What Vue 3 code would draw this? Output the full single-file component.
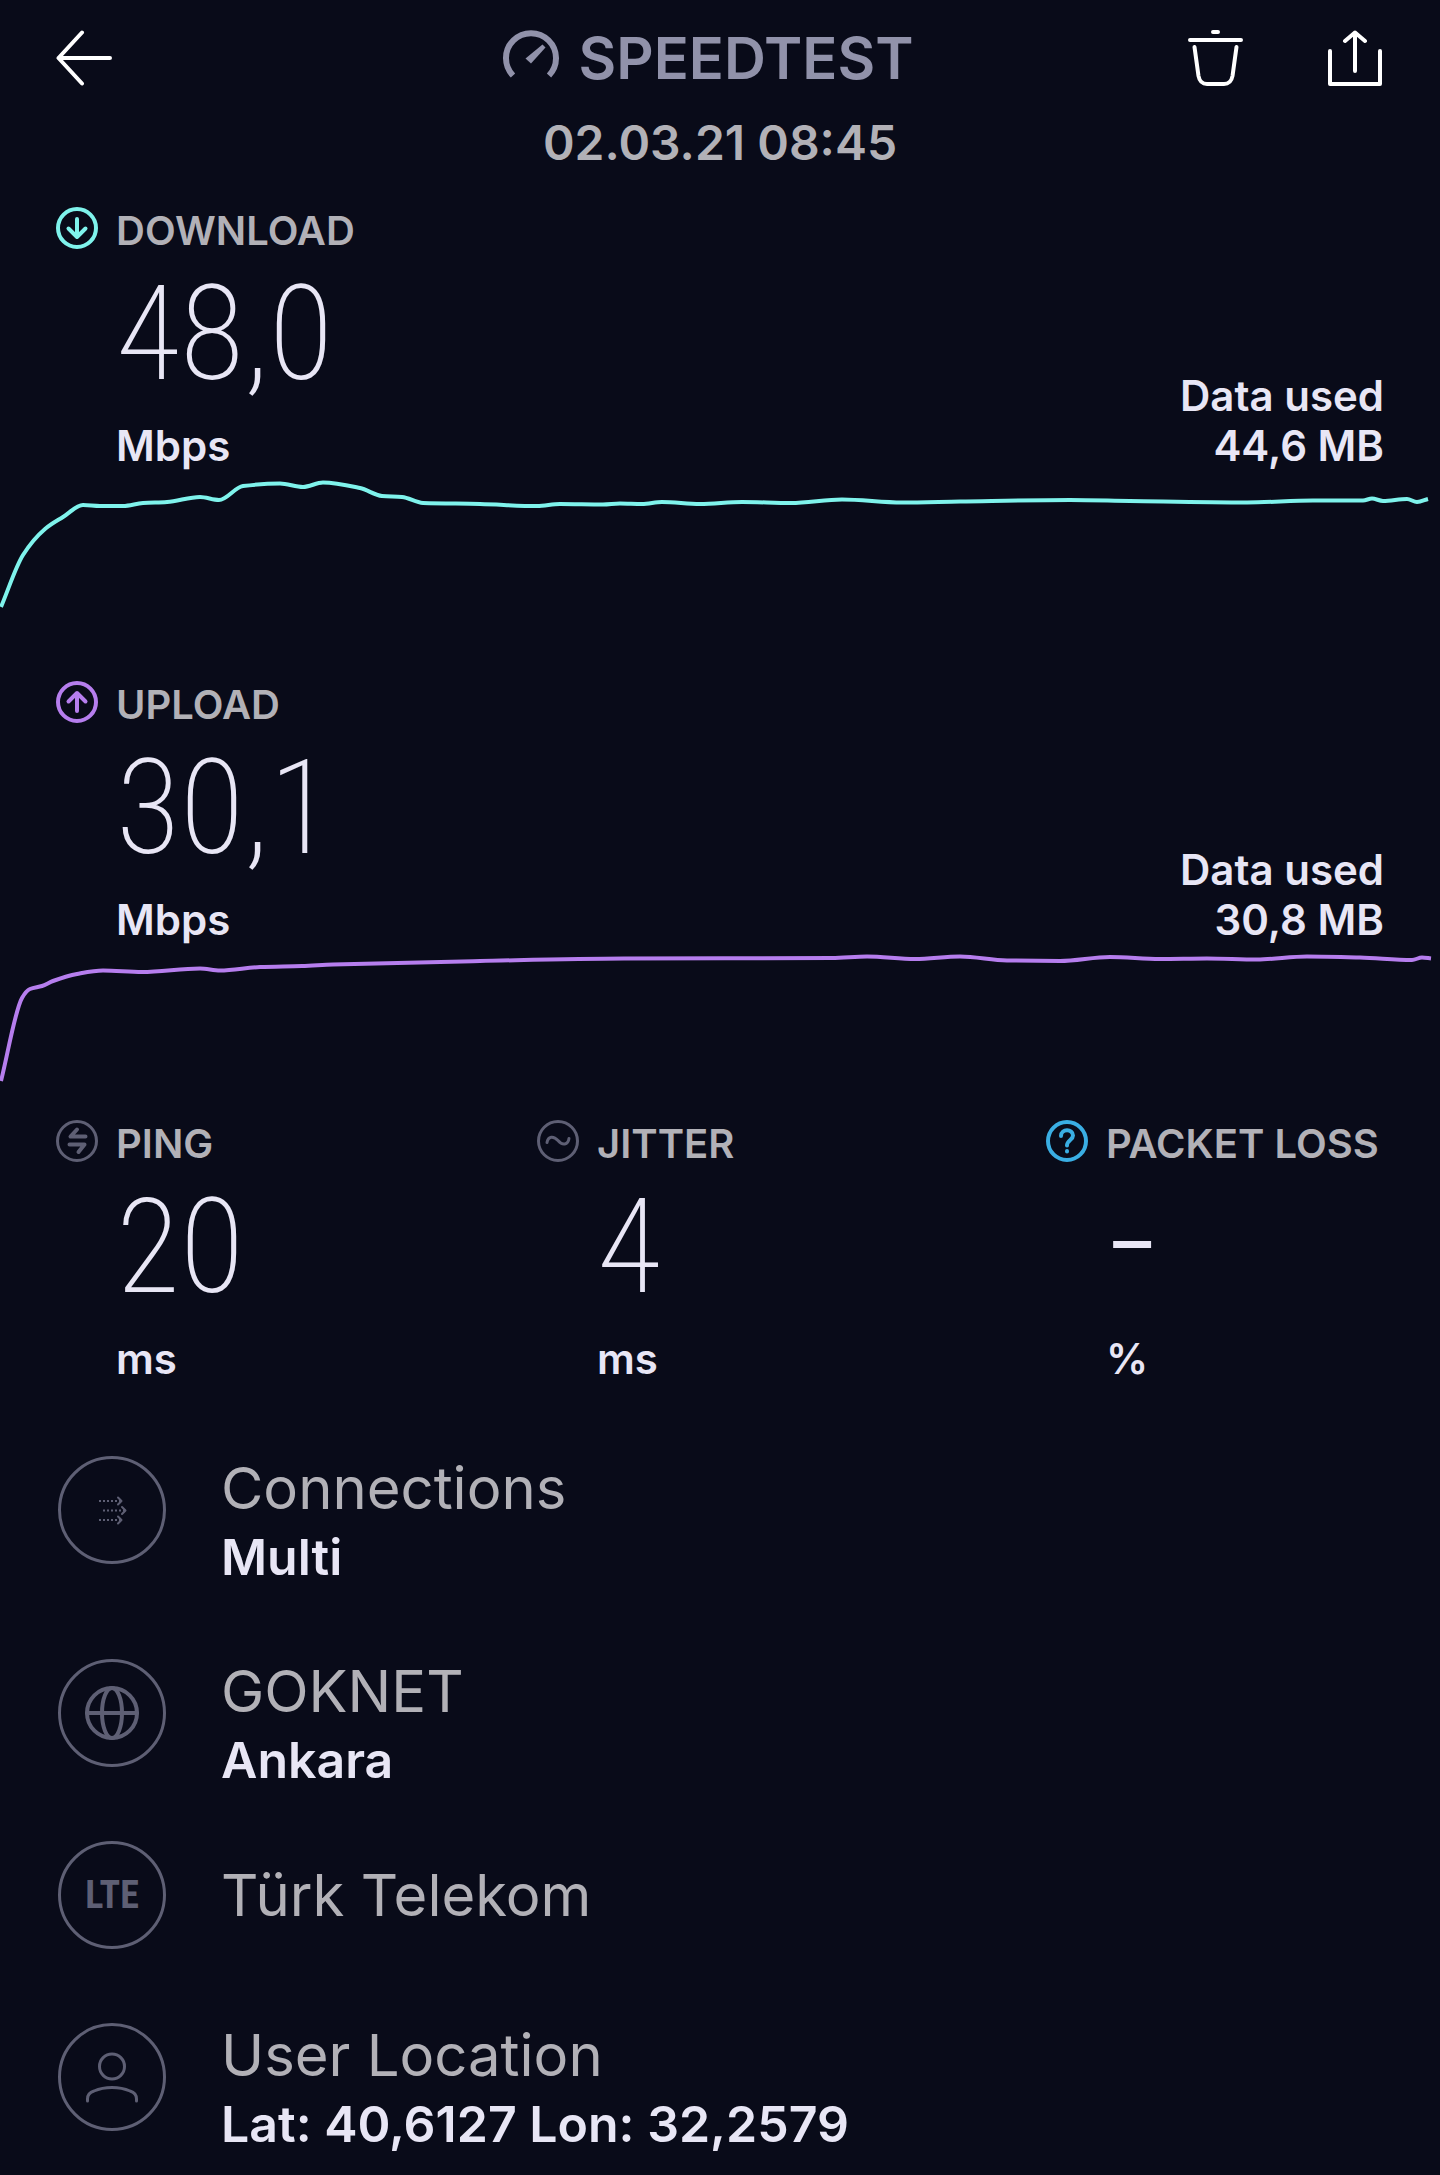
<script setup>
const download = [
  [1, 136], [23, 84], [45, 58], [63, 46], [83, 34], [100, 35], [123, 35], [143, 32], [167, 31],
  [200, 26], [219, 29], [243, 15], [280, 12.5], [303, 16], [323, 11.5], [360, 17], [382, 25],
  [402, 26], [423, 32], [480, 33], [537, 35], [560, 33], [603, 33.5], [620, 32.5], [642, 33],
  [662, 31], [700, 33], [742, 31], [791, 32], [842, 28.5], [902, 31.5], [960, 30.5], [1070, 29],
  [1130, 30], [1247, 31.5], [1313, 29.5], [1363, 29.5], [1372, 27.5], [1383, 30], [1407, 28],
  [1417, 31], [1428, 28],
]

const upload = [
  [1, 136], [22, 53], [30, 44], [42, 41], [53, 36], [77, 29], [103, 25.5], [142, 27], [200, 23.5],
  [220, 25.5], [260, 22], [302, 21], [333, 19.5], [480, 16], [624, 13.5], [832, 13], [867, 11.5],
  [915, 14], [960, 11.5], [1007, 15.5], [1060, 16], [1110, 12], [1160, 14], [1207, 13.5],
  [1257, 14.5], [1307, 11.5], [1360, 12.5], [1412, 15], [1422, 12.5], [1431, 13.5],
]

// Monotone cubic interpolation, so the curve never overshoots a sample
function smooth(points) {
  const last = points.length - 1
  const slope = points.slice(1).map((p, i) => (p[1] - points[i][1]) / (p[0] - points[i][0]))
  const tangent = points.map((_, i) => {
    if (i === 0) return slope[0]
    if (i === last) return slope[last - 1]
    const a = slope[i - 1]
    const b = slope[i]
    return a * b <= 0 ? 0 : (2 * a * b) / (a + b)
  })
  let d = `M${points[0][0]} ${points[0][1]}`
  for (let i = 0; i < last; i++) {
    const [x0, y0] = points[i]
    const [x1, y1] = points[i + 1]
    const h = (x1 - x0) / 3
    d += `C${x0 + h} ${y0 + h * tangent[i]} ${x1 - h} ${y1 - h * tangent[i + 1]} ${x1} ${y1}`
  }
  return d
}

const transfers = [
  {
    id: 'download', label: 'DOWNLOAD', value: '48,0', used: '44,6 MB', line: smooth(download),
    arrow: 'M21 12V30M12.5 21.5L21 30L29.5 21.5',
  },
  {
    id: 'upload', label: 'UPLOAD', value: '30,1', used: '30,8 MB', line: smooth(upload),
    arrow: 'M21 30V12M12.5 20.5L21 12L29.5 20.5',
  },
]
</script>

<template>
  <main class="result">
    <header class="header">
      <div class="bar">
        <div class="side">
          <button type="button" aria-label="Back">
            <svg class="action" viewBox="0 0 56 56"><path d="M26 2.500L2.500 28L26 53.500M2.500 28H54" /></svg>
          </button>
        </div>
        <h1 class="brand">
          <svg class="gauge" viewBox="0 0 56 56" aria-hidden="true">
            <path class="dial" d="M10 45.500A25 25 0 1 1 46 45.500" />
            <path class="needle" d="M39.500 14.500L42.500 17.500L28 33.500L22.500 28.500Z" />
          </svg>
          <span>SPEEDTEST</span>
        </h1>
        <div class="side end">
          <button type="button" aria-label="Delete">
            <svg class="action" viewBox="0 0 56 56">
              <path d="M25 2H30M2 10H53M6.500 17L10.500 46Q12 54 19 54H36Q43 54 44.500 46L48.500 17" />
            </svg>
          </button>
          <button type="button" aria-label="Share">
            <svg class="action" viewBox="0 0 56 56">
              <path d="M2 21V54H52V21M27 41V2.500M17 11L27 2.500L37 11" />
            </svg>
          </button>
        </div>
      </div>
      <time class="date" datetime="2021-03-02T08:45">02.03.21 08:45</time>
    </header>

    <section v-for="t in transfers" :key="t.id" class="transfer" :class="t.id">
      <div class="summary">
        <div class="metric">
          <svg class="badge" viewBox="0 0 42 42" aria-hidden="true">
            <circle cx="21" cy="21" r="19" />
            <path class="bold" :d="t.arrow" />
          </svg>
          <h2 class="label">{{ t.label }}</h2>
          <p class="value">{{ t.value }}</p>
          <p class="unit">Mbps</p>
        </div>
        <p class="used">Data used<br />{{ t.used }}</p>
      </div>
      <svg class="chart" viewBox="0 0 1440 140" aria-hidden="true"><path :d="t.line" /></svg>
    </section>

    <section class="latency">
      <div class="metric">
        <svg class="badge" viewBox="0 0 42 42" aria-hidden="true">
          <circle cx="21" cy="21" r="19.500" />
          <path class="bold" d="M21 9.500L14.500 16.500H29.500M13.500 24.500H28.500L22.500 32" />
        </svg>
        <h2 class="label">PING</h2>
        <p class="value">20</p>
        <p class="unit">ms</p>
      </div>
      <div class="metric">
        <svg class="badge" viewBox="0 0 42 42" aria-hidden="true">
          <circle cx="21" cy="21" r="19.500" />
          <path d="M10 22.500C11 16 16.500 15.500 21 20.500C25.500 26 31 25 32 18.500" />
        </svg>
        <h2 class="label">JITTER</h2>
        <p class="value">4</p>
        <p class="unit">ms</p>
      </div>
      <div class="metric loss">
        <svg class="badge" viewBox="0 0 42 42" aria-hidden="true">
          <circle cx="21" cy="21" r="19" />
          <path class="bold" d="M15 16C15 8.500 27 8.500 27 15.500C27 20 21 20 21 25.500M21 31V31.500" />
        </svg>
        <h2 class="label">PACKET LOSS</h2>
        <p class="value empty">–</p>
        <p class="unit">%</p>
      </div>
    </section>

    <ul class="details">
      <li class="detail">
        <svg class="symbol" viewBox="0 0 108 108" aria-hidden="true">
          <circle cx="54" cy="54" r="52.500" />
          <path class="dots" d="M41 45H63M45 54.500H67M41 64H63" />
          <path class="tips" d="M60 41.500L63.500 45L60 48.500M64 51L67.500 54.500L64 58M60 60.500L63.500 64L60 67.500" />
        </svg>
        <div class="text">
          <h3>Connections</h3>
          <p>Multi</p>
        </div>
      </li>
      <li class="detail">
        <svg class="symbol" viewBox="0 0 108 108" aria-hidden="true">
          <circle cx="54" cy="54" r="52.500" />
          <circle class="thick" cx="54" cy="54" r="25" />
          <ellipse class="thick" cx="54" cy="54" rx="10" ry="25" />
          <path class="thick" d="M29 54H79" />
        </svg>
        <div class="text">
          <h3>GOKNET</h3>
          <p>Ankara</p>
        </div>
      </li>
      <li class="detail single">
        <span class="network">LTE</span>
        <div class="text">
          <h3>Türk Telekom</h3>
        </div>
      </li>
      <li class="detail">
        <svg class="symbol" viewBox="0 0 108 108" aria-hidden="true">
          <circle cx="54" cy="54" r="52.500" />
          <circle cx="54" cy="43.500" r="12.500" />
          <path d="M29.500 78V76Q29.500 70 36 68Q44 64.500 54 64.500Q64 64.500 72 68Q78.500 70 78.500 76V78" />
        </svg>
        <div class="text">
          <h3>User Location</h3>
          <p>Lat: 40,6127 Lon: 32,2579</p>
        </div>
      </li>
    </ul>
  </main>
</template>

<style>
body {
  margin: 0;
  background: #090b19;
}
</style>

<style scoped>
.result {
  --text: #e8e6f5;
  --muted: #b2b1b7;
  --line: #5e5f74;
  min-height: 100vh;
  box-sizing: border-box;
  padding: 28px 0 18px;
  background: #090b19;
  color: var(--text);
  font-family: Inter, "Noto Sans", sans-serif;
}

h1, h2, h3, p, ul {
  margin: 0;
  padding: 0;
  font-weight: inherit;
}

svg {
  display: block;
  flex: none;
  fill: none;
  stroke: currentColor;
  stroke-linecap: round;
  stroke-linejoin: round;
}

.header {
  padding: 0 56px;
  text-align: center;
}

.bar {
  display: grid;
  grid-template-columns: 1fr auto 1fr;
  align-items: center;
  height: 58px;
}

.side {
  display: flex;
  gap: 84px;
}

.side.end {
  justify-content: flex-end;
}

button {
  padding: 0;
  border: 0;
  background: none;
  color: #fff;
  cursor: pointer;
}

.action {
  width: 56px;
  height: 56px;
  stroke-width: 4;
}

.brand {
  display: flex;
  align-items: center;
  gap: 20px;
  padding-right: 24px;
  color: #9192aa;
  font-size: 58px;
  font-weight: 600;
  line-height: 60px;
}

.gauge {
  width: 56px;
  height: 56px;
}

.dial {
  stroke-width: 6;
  stroke-linecap: butt;
}

.needle {
  fill: currentColor;
  stroke: none;
}

.date {
  display: block;
  margin-top: 29px;
  color: var(--muted);
  font-size: 48px;
  font-weight: 600;
  line-height: 56px;
}

.transfer {
  margin-top: 70px;
}

.header + .transfer {
  margin-top: 36px;
}

.summary {
  display: flex;
  justify-content: space-between;
  align-items: flex-end;
  padding: 0 56px;
}

.metric {
  display: grid;
  grid-template-columns: 42px auto;
  column-gap: 18px;
  justify-content: start;
}

.metric > * {
  grid-column: 2;
}

.metric > .badge {
  grid-column: 1;
  width: 42px;
  height: 42px;
  color: var(--line);
  stroke-width: 3;
}

.badge .bold,
.download .badge,
.upload .badge,
.loss > .badge {
  stroke-width: 4;
}

.download .badge,
.download .chart {
  color: #7ff3ec;
}

.upload .badge,
.upload .chart {
  color: #b67eee;
}

.loss > .badge {
  color: #3aaee3;
}

.label {
  color: var(--muted);
  font-size: 40px;
  font-weight: 600;
  line-height: 48px;
  white-space: nowrap;
}

.value {
  margin-top: 8px;
  font-family: "Roboto Condensed", Roboto, sans-serif;
  font-size: 132px;
  font-weight: 200;
  line-height: 142px;
}

.value.empty {
  font-size: 92px;
  font-weight: 400;
}

.unit,
.used {
  font-size: 42px;
  font-weight: 600;
  line-height: 50px;
}

.unit {
  margin-top: 16px;
}

.used {
  text-align: right;
}

.chart {
  width: 100%;
  height: auto;
  stroke-width: 4;
  stroke-linecap: butt;
}

.latency {
  display: grid;
  grid-template-columns: 481fr 509fr 338fr;
  margin-top: 35px;
  padding: 0 56px;
}

.details {
  padding: 3px 58px 0;
  list-style: none;
}

.detail {
  display: flex;
  align-items: flex-start;
  gap: 55px;
  margin-top: 65px;
}

.detail.single {
  align-items: center;
  min-height: 118px;
  margin-top: 43px;
}

.symbol,
.network {
  flex: none;
  box-sizing: border-box;
  width: 108px;
  height: 108px;
  margin-top: 4px;
  color: var(--line);
  stroke-width: 3;
}

.single .network {
  margin-top: 0;
}

.network {
  display: grid;
  place-items: center;
  border: 3px solid;
  border-radius: 50%;
  font-family: "Roboto Condensed", Roboto, sans-serif;
  font-size: 38px;
  font-weight: 700;
}

.symbol .thick {
  stroke-width: 4;
}

.symbol .dots {
  stroke-width: 2;
  stroke-dasharray: 2 2;
  stroke-linecap: butt;
}

.symbol .tips {
  stroke-width: 2;
}

.text h3 {
  color: var(--muted);
  font-size: 58px;
  font-weight: 400;
  line-height: 72px;
}

.text p {
  font-size: 50px;
  font-weight: 600;
  line-height: 66px;
}
</style>
